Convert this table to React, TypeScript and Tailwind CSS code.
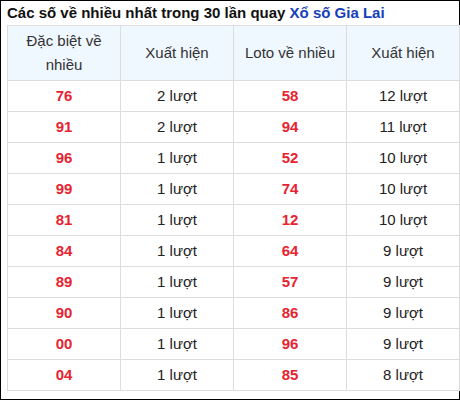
const rows: [string, string, string, string][] = [
  ["76", "2 lượt", "58", "12 lượt"],
  ["91", "2 lượt", "94", "11 lượt"],
  ["96", "1 lượt", "52", "10 lượt"],
  ["99", "1 lượt", "74", "10 lượt"],
  ["81", "1 lượt", "12", "10 lượt"],
  ["84", "1 lượt", "64", "9 lượt"],
  ["89", "1 lượt", "57", "9 lượt"],
  ["90", "1 lượt", "86", "9 lượt"],
  ["00", "1 lượt", "96", "9 lượt"],
  ["04", "1 lượt", "85", "8 lượt"],
];

const headers = ["Đặc biệt về nhiều", "Xuất hiện", "Loto về nhiều", "Xuất hiện"];

export default function App() {
  return (
    <div
      className="h-[400px] w-[460px] border border-black pl-[6px] text-[15px]"
      style={{ fontFamily: '"Liberation Sans", Arial, sans-serif' }}
    >
      <div className="h-[24px] font-bold leading-[24px] text-[#111]">
        Các số về nhiều nhất trong 30 lần quay{" "}
        <a href="#" className="text-[#1540b8]">
          Xổ số Gia Lai
        </a>
      </div>
      <table className="w-[452px] table-fixed border-collapse">
        <thead>
          <tr className="h-[55px] bg-[#eff7ff]">
            {headers.map((h, i) => (
              <th
                key={i}
                className="w-[113px] border border-[#dddddd] px-[8px] text-center align-middle font-normal leading-[24px] text-[#333]"
              >
                {h}
              </th>
            ))}
          </tr>
        </thead>
        <tbody>
          {rows.map((r, i) => (
            <tr key={i} className="h-[31px]">
              <td className="border border-[#dddddd] text-center font-bold text-[#e8232f]">{r[0]}</td>
              <td className="border border-[#dddddd] text-center text-[#222]">{r[1]}</td>
              <td className="border border-[#dddddd] text-center font-bold text-[#e8232f]">{r[2]}</td>
              <td className="border border-[#dddddd] text-center text-[#222]">{r[3]}</td>
            </tr>
          ))}
        </tbody>
      </table>
    </div>
  );
}
